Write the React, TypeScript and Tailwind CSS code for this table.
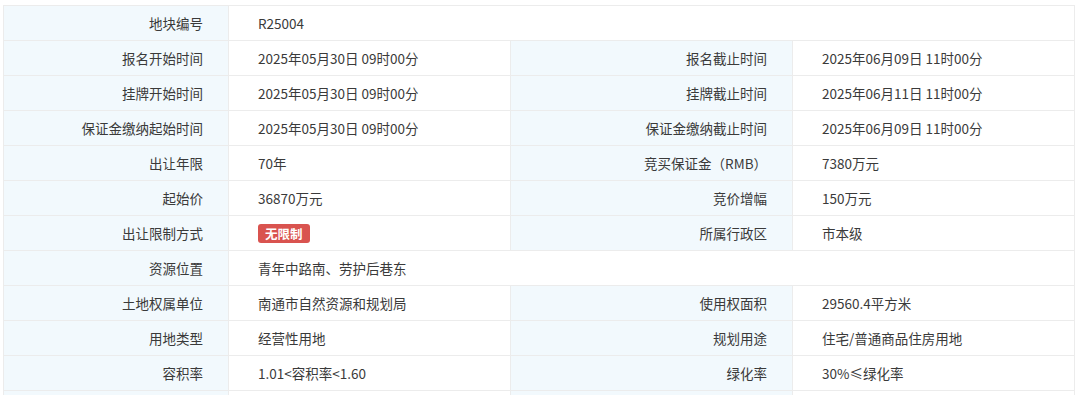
import React from "react";

type Cell = { label: string; value: React.ReactNode };
type Row = Cell[];

const badge = (
  <span className="inline-block rounded-[3px] bg-[#d9534f] px-[7px] text-[12.5px] font-bold leading-[19px] text-white">
    无限制
  </span>
);

const rows: Row[] = [
  [{ label: "地块编号", value: "R25004" }],
  [
    { label: "报名开始时间", value: "2025年05月30日 09时00分" },
    { label: "报名截止时间", value: "2025年06月09日 11时00分" },
  ],
  [
    { label: "挂牌开始时间", value: "2025年05月30日 09时00分" },
    { label: "挂牌截止时间", value: "2025年06月11日 11时00分" },
  ],
  [
    { label: "保证金缴纳起始时间", value: "2025年05月30日 09时00分" },
    { label: "保证金缴纳截止时间", value: "2025年06月09日 11时00分" },
  ],
  [
    { label: "出让年限", value: "70年" },
    { label: "竞买保证金（RMB）", value: "7380万元" },
  ],
  [
    { label: "起始价", value: "36870万元" },
    { label: "竞价增幅", value: "150万元" },
  ],
  [
    { label: "出让限制方式", value: badge },
    { label: "所属行政区", value: "市本级" },
  ],
  [{ label: "资源位置", value: "青年中路南、劳护后巷东" }],
  [
    { label: "土地权属单位", value: "南通市自然资源和规划局" },
    { label: "使用权面积", value: "29560.4平方米" },
  ],
  [
    { label: "用地类型", value: "经营性用地" },
    { label: "规划用途", value: "住宅/普通商品住房用地" },
  ],
  [
    { label: "容积率", value: "1.01<容积率<1.60" },
    { label: "绿化率", value: "30%≤绿化率" },
  ],
  [
    { label: "", value: "" },
    { label: "", value: "" },
  ],
];

const labelCls = "flex h-[34px] items-center justify-end bg-[#f2f9fd] pr-[25px]";
const valueCls = "flex h-[34px] items-center bg-white pl-[29px]";

export default function App() {
  return (
    <div
      className="h-[395px] overflow-hidden bg-white pl-[3px] pt-[5px] text-[13.5px] text-[#3a3a3a]"
      style={{ fontFamily: '"Noto Sans CJK SC", "Noto Sans", sans-serif' }}
    >
      <div className="grid w-[1072px] grid-cols-[224px_281px_281px_281px] gap-px bg-[#ececec] p-px">
        {rows.map((r, i) =>
          r.length === 1 ? (
            <React.Fragment key={i}>
              <div className={labelCls}>{r[0].label}</div>
              <div className={`${valueCls} col-span-3`}>{r[0].value}</div>
            </React.Fragment>
          ) : (
            <React.Fragment key={i}>
              <div className={labelCls}>{r[0].label}</div>
              <div className={valueCls}>{r[0].value}</div>
              <div className={labelCls}>{r[1].label}</div>
              <div className={valueCls}>{r[1].value}</div>
            </React.Fragment>
          )
        )}
      </div>
    </div>
  );
}
